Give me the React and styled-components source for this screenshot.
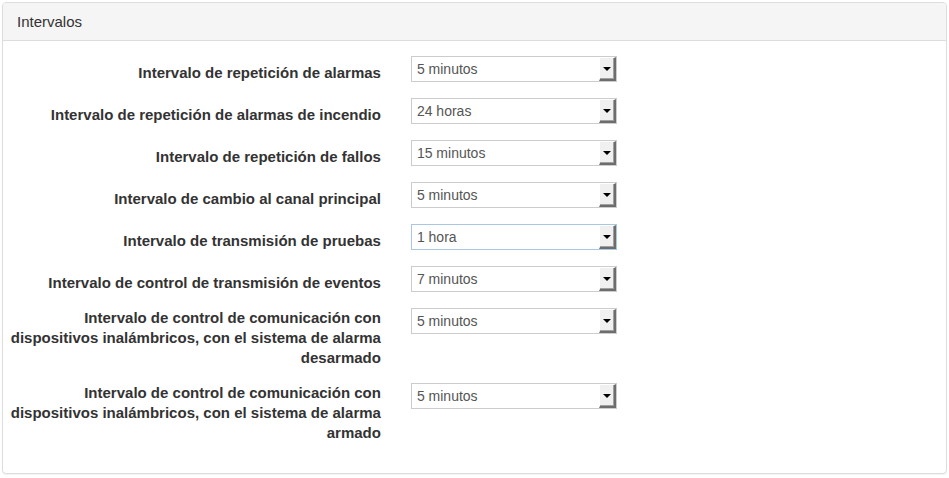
import React from 'react';
import styled, { createGlobalStyle } from 'styled-components';

const GlobalStyle = createGlobalStyle`
  body {
    margin: 0;
    background: #fff;
    font-family: "Liberation Sans", Arial, sans-serif;
    font-size: 14px;
    color: #333;
  }
`;

const Page = styled.div`
  padding: 2px;
`;

const Panel = styled.section`
  border: 1px solid #ddd;
  border-radius: 4px;
  background: #fff;
  box-shadow: 0 1px 1px rgba(0, 0, 0, 0.05);
`;

const Heading = styled.header`
  background: #f5f5f5;
  border-bottom: 1px solid #ddd;
  border-radius: 3px 3px 0 0;
  padding: 10px 15px 9px 14px;
`;

const Title = styled.h3`
  margin: 0;
  font-size: 15px;
  font-weight: normal;
  line-height: 18px;
  color: #333;
`;

const Body = styled.div`
  padding: 15px 0;
`;

const Row = styled.div`
  display: grid;
  grid-template-columns: 5fr 3fr 4fr;
  margin-bottom: 15px;
`;

const Label = styled.label`
  padding: ${p => (p.$multi ? '0' : '7px')} 15px 0 0;
  text-align: right;
  font-size: 15px;
  font-weight: bold;
  line-height: 20px;
  color: #333;
`;

const Field = styled.div`
  padding: 0 15px;
`;

const Select = styled.div`
  display: flex;
  align-items: center;
  height: 26px;
  box-sizing: border-box;
  border: 1px solid ${p => (p.$active ? '#a9c7e3' : '#ccc')};
  background: #fff;
  color: #555;
  font-size: 14px;
  padding-left: 5px;
`;

const Value = styled.span`
  flex: 1;
`;

const Arrow = styled.span`
  display: flex;
  align-items: center;
  justify-content: center;
  width: 17px;
  height: 24px;
  box-sizing: border-box;
  background: #f0f0f0;
  border-top: 1px solid #fff;
  border-left: 1px solid #fff;
  border-right: 2px solid #6d6d6d;
  border-bottom: 2px solid #6d6d6d;
  box-shadow: inset -1px -1px 0 #a0a0a0;

  &::after {
    content: '';
    border-left: 4px solid transparent;
    border-right: 4px solid transparent;
    border-top: 4px solid #000;
  }
`;

const rows = [
  { label: 'Intervalo de repetición de alarmas', value: '5 minutos' },
  { label: 'Intervalo de repetición de alarmas de incendio', value: '24 horas' },
  { label: 'Intervalo de repetición de fallos', value: '15 minutos' },
  { label: 'Intervalo de cambio al canal principal', value: '5 minutos' },
  { label: 'Intervalo de transmisión de pruebas', value: '1 hora', active: true },
  { label: 'Intervalo de control de transmisión de eventos', value: '7 minutos' },
  {
    label: 'Intervalo de control de comunicación con dispositivos inalámbricos, con el sistema de alarma desarmado',
    value: '5 minutos',
    multi: true,
  },
  {
    label: 'Intervalo de control de comunicación con dispositivos inalámbricos, con el sistema de alarma armado',
    value: '5 minutos',
    multi: true,
  },
];

function App() {
  return (
    <Page>
      <GlobalStyle />
      <Panel>
        <Heading>
          <Title>Intervalos</Title>
        </Heading>
        <Body>
          {rows.map((r, i) =>
            <Row key={i}>
              <Label $multi={r.multi}>{r.label}</Label>
              <Field>
                <Select $active={r.active}>
                  <Value>{r.value}</Value>
                  <Arrow />
                </Select>
              </Field>
            </Row>
          )}
        </Body>
      </Panel>
    </Page>
  );
}

export default App;
